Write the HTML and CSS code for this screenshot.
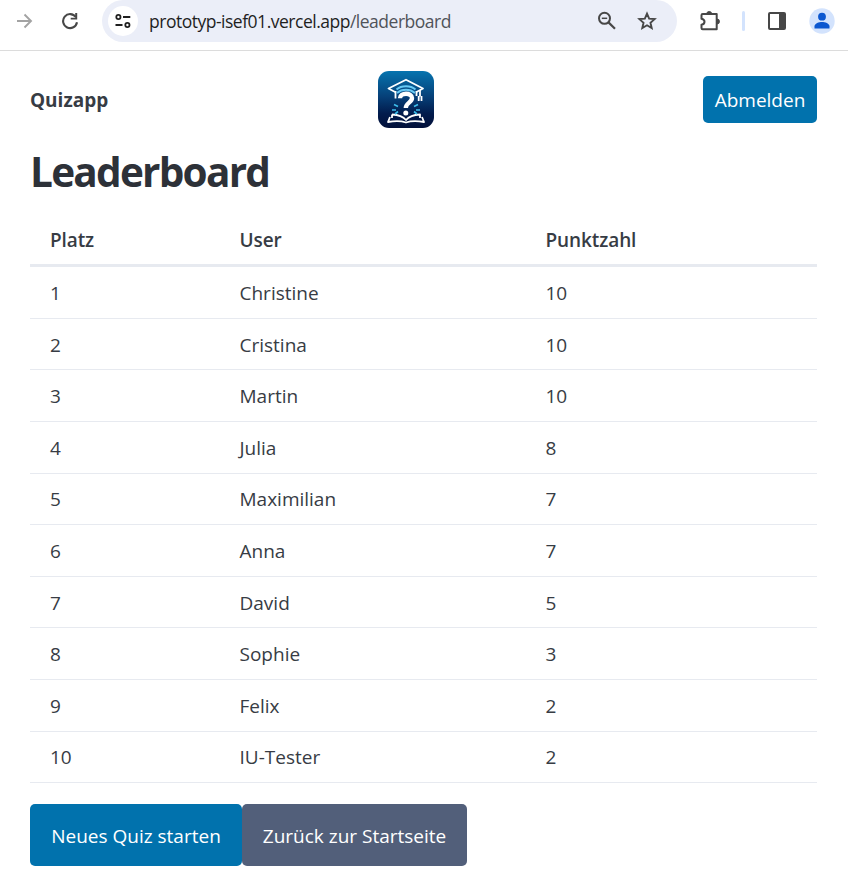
FILE: index.html
```
<!DOCTYPE html>
<html lang="de">
<head>
<meta charset="utf-8">
<title>Quizapp – Leaderboard</title>
<link rel="stylesheet" href="styles.css">
</head>
<body>
<div class="toolbar">
  <svg class="forward" width="18" height="18" viewBox="0 0 18 18"><path d="M1 9h14M8.500 2.500 15 9l-6.500 6.500" fill="none" stroke="#a3a3a3" stroke-width="1.900"/></svg>
  <svg class="reload" width="18" height="18" viewBox="0 0 18 18"><path d="M14.800 5A7 7 0 1 0 16 10.300" fill="none" stroke="#474747" stroke-width="2.100"/><path d="M16.200 1v6.600H9.700V5.700h4.500V1z" fill="#474747"/></svg>
  <div class="address">
    <span class="site"><svg width="16" height="16" viewBox="0 0 16 16" fill="none" stroke="#1f1f1f" stroke-width="1.800"><circle cx="3.400" cy="4" r="2.100"/><path d="M8 4h7.300M.500 12h7"/><circle cx="12.400" cy="12" r="2.100"/></svg></span>
    <span class="url">prototyp-isef01.vercel.app<span class="path">/leaderboard</span></span>
    <svg class="magnify" width="20" height="20" viewBox="0 0 20 20" fill="none" stroke="#474747"><circle cx="7.500" cy="7.300" r="5.500" stroke-width="2"/><path d="M11.500 11.400 18 17.800" stroke-width="2.200"/><path d="M4.800 7.300h5.400" stroke-width="1.500"/></svg>
    <svg class="star" width="20" height="20" viewBox="0 0 20 20"><path d="m10 2.600 2.150 5.050 5.450.470-4.130 3.600 1.230 5.380L10 14.250 5.300 17.100l1.230-5.380L2.400 8.120l5.450-.470z" fill="none" stroke="#474747" stroke-width="1.900"/></svg>
  </div>
  <svg class="puzzle" width="22" height="22" viewBox="0 0 22 22"><path d="M3.700 4h14v15.300h-14a1.200 1.200 0 0 1-1.200-1.200v-3.300c4-.8 4-5.300 0-6.100V5.200A1.200 1.200 0 0 1 3.700 4z" fill="none" stroke="#474747" stroke-width="2" stroke-linejoin="round"/><path d="M7.700 4a2.500 2.500 0 0 1 5 0zM18 9a2.500 2.500 0 0 1 0 5z" fill="#474747" stroke="#474747"/></svg>
  <span class="divider"></span>
  <svg class="panel" width="20" height="20" viewBox="0 0 20 20"><rect x="2" y="2" width="16" height="16" rx="1" fill="#fff" stroke="#474747" stroke-width="2"/><path d="M12 2h6v16h-6z" fill="#474747"/></svg>
  <svg class="avatar" width="26" height="26" viewBox="0 0 26 26"><circle cx="13" cy="13" r="12.700" fill="#d3e3fd"/><circle cx="13" cy="8.700" r="3.900" fill="#0b57d0"/><path d="M5.500 20.500v-2.200c0-2.800 4.500-4.300 7.500-4.300s7.500 1.500 7.500 4.300v2.200z" fill="#0b57d0"/></svg>
</div>
<main>
  <header>
    <strong class="brand">Quizapp</strong>
    <svg class="logo" width="56" height="57" viewBox="0 0 56 57">
      <defs><linearGradient id="night" x1="0" y1="0" x2="0" y2="1"><stop offset="0" stop-color="#0674af"/><stop offset=".45" stop-color="#064078"/><stop offset=".75" stop-color="#021b4c"/><stop offset="1" stop-color="#02103a"/></linearGradient></defs>
      <rect width="56" height="57" rx="11" fill="url(#night)"/>
      <g fill="none" stroke="#fff" stroke-width="1.800" stroke-linejoin="round">
        <path d="M18 21.500 10.500 17.500 28 8.700l17 8.800-7 3.700"/>
        <path d="M17.500 20v7.500M38.500 20v5M42 19v6.500M40.700 25v5M43.500 25v5"/>
        <path d="M14 43.500c6 .3 11 2 14 5.500 3-3.500 8-5.200 14-5.500v3.500M14 43.500v3.500M12 46l-2 5c7-1.300 13-1.300 18 .5 5-1.800 11-1.800 18-.5l-2-5"/>
      </g>
      <path d="M18.500 18.500c5-4.200 14-4.200 19 0M19 22c5-4.200 13-4.200 18 0" fill="none" stroke="#67c9f4" stroke-width="2"/>
      <path d="M22 27.300c0-6 12-6 12-.3 0 4.800-6.200 4.500-6.200 10" fill="none" stroke="#fff" stroke-width="4.400"/>
      <circle cx="27.800" cy="42" r="2.500" fill="#fff"/>
      <path d="m16 33.500 4 2M14 39h4M17 43l3-2.500M40 33.500l-4 2M42 39h-4M39 43l-3-2.500" stroke="#3dbcea" stroke-width="1.700"/>
    </svg>
    <button class="logout">Abmelden</button>
  </header>
  <h1>Leaderboard</h1>
  <table>
    <colgroup><col class="rank"><col class="user"><col></colgroup>
    <thead><tr><th>Platz</th><th>User</th><th>Punktzahl</th></tr></thead>
    <tbody>
      <tr><td>1</td><td>Christine</td><td>10</td></tr>
      <tr><td>2</td><td>Cristina</td><td>10</td></tr>
      <tr><td>3</td><td>Martin</td><td>10</td></tr>
      <tr><td>4</td><td>Julia</td><td>8</td></tr>
      <tr><td>5</td><td>Maximilian</td><td>7</td></tr>
      <tr><td>6</td><td>Anna</td><td>7</td></tr>
      <tr><td>7</td><td>David</td><td>5</td></tr>
      <tr><td>8</td><td>Sophie</td><td>3</td></tr>
      <tr><td>9</td><td>Felix</td><td>2</td></tr>
      <tr><td>10</td><td>IU-Tester</td><td>2</td></tr>
    </tbody>
  </table>
  <div class="actions"><button class="primary">Neues Quiz starten</button><button class="secondary">Zurück zur Startseite</button></div>
</main>
</body>
</html>
```
FILE: styles.css
```
* { box-sizing: border-box; }
body {
  margin: 0;
  background: #fff;
  color: #373c44;
  font-family: "Open Sans", "Noto Sans", sans-serif;
  font-size: 19px;
}
svg { display: block; flex: none; }
.toolbar {
  display: flex;
  align-items: center;
  height: 51px;
  padding: 0 13px 9px 16px;
  border-bottom: 1px solid #dcdcdc;
}
.forward { margin-right: 27px; }
.reload { margin-right: 23px; }
.address {
  display: flex;
  align-items: center;
  width: 575px;
  height: 42px;
  margin-right: 22px;
  padding: 0 20px 0 6px;
  border-radius: 21px;
  background: #ebeef8;
}
.site {
  display: flex;
  align-items: center;
  justify-content: center;
  width: 30px;
  height: 30px;
  margin-right: 11px;
  border-radius: 50%;
  background: #fff;
}
.url {
  flex: 1;
  color: #1f1f1f;
  font-size: 17.5px;
  letter-spacing: -0.49px;
  line-height: 24px;
}
.path { color: #50535a; }
.magnify { margin-right: 20px; }
.puzzle { margin-right: 21px; }
.divider { width: 3px; height: 20px; margin-right: 22px; border-radius: 2px; background: #d3e3fd; }
.panel { margin-right: 22px; }
main { padding: 20px 31px 0 30px; }
header {
  display: flex;
  justify-content: space-between;
  align-items: center;
  height: 57px;
}
.brand { font-weight: 700; }
button {
  padding: 0;
  border: 0;
  border-radius: 5px;
  background: #0172ad;
  color: #fff;
  font: inherit;
}
.logout { width: 114px; height: 47px; }
h1 {
  margin: 16px 0 17px;
  color: #2d3138;
  font-size: 40.5px;
  font-weight: 700;
  letter-spacing: -1.75px;
  line-height: 56px;
}
table { width: 100%; border-collapse: separate; border-spacing: 0; table-layout: fixed; }
.rank { width: 189.5px; }
.user { width: 306px; }
th, td { height: 51.6px; padding: 2px 20px 0; text-align: left; font-weight: 400; line-height: 29px; border-bottom: 1px solid #e7eaf0; }
th { height: 50.3px; padding-top: 0; font-weight: 600; letter-spacing: -0.1px; border-bottom: 3px solid #e7eaf0; }
.actions { display: flex; margin-top: 20.7px; }
.actions button { height: 62px; padding-top: 2px; }
.primary { width: 212px; }
.secondary { width: 225px; background: #525f7a; }
```
